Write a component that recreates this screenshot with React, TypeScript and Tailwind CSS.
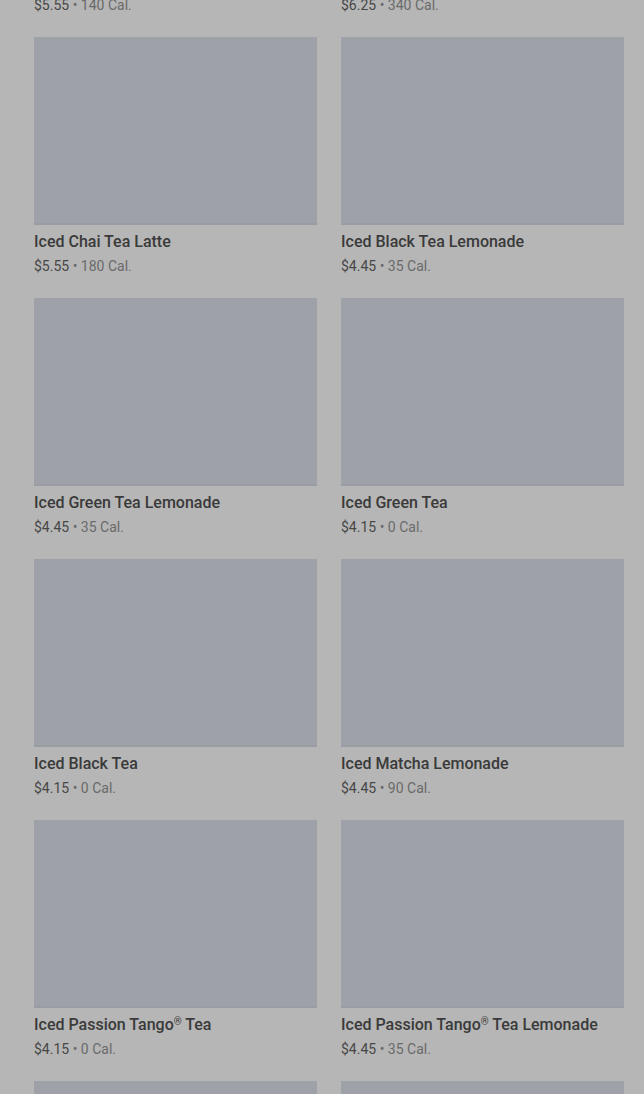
import React from "react";

type Item = { name: string; price: string; cal: string };

const items: Item[] = [
  { name: "Iced Coffee", price: "$5.55", cal: "140 Cal." },
  { name: "Iced Latte", price: "$6.25", cal: "340 Cal." },
  { name: "Iced Chai Tea Latte", price: "$5.55", cal: "180 Cal." },
  { name: "Iced Black Tea Lemonade", price: "$4.45", cal: "35 Cal." },
  { name: "Iced Green Tea Lemonade", price: "$4.45", cal: "35 Cal." },
  { name: "Iced Green Tea", price: "$4.15", cal: "0 Cal." },
  { name: "Iced Black Tea", price: "$4.15", cal: "0 Cal." },
  { name: "Iced Matcha Lemonade", price: "$4.45", cal: "90 Cal." },
  { name: "Iced Passion Tango® Tea", price: "$4.15", cal: "0 Cal." },
  { name: "Iced Passion Tango® Tea Lemonade", price: "$4.45", cal: "35 Cal." },
  { name: "Iced Peach Green Tea", price: "$4.45", cal: "60 Cal." },
  { name: "Iced Peach Green Tea Lemonade", price: "$4.45", cal: "80 Cal." },
];

function Name({ text }: { text: string }) {
  const parts = text.split("®");
  if (parts.length === 1) return <>{text}</>;
  return (
    <>
      {parts[0]}
      <span className="text-[10px] leading-none align-[5px]">®</span>
      {parts[1]}
    </>
  );
}

export default function App() {
  return (
    <div
      className="w-[644px] h-[1094px] overflow-hidden bg-[#b6b6b6]"
      style={{ fontFamily: "Roboto, 'Noto Sans', sans-serif" }}
    >
      <div className="-mt-[224px] pl-[34px] pr-[20px] grid grid-cols-2 gap-x-[24px] gap-y-[22px]">
        {items.map((it, i) => (
          <div key={i} className="flex flex-col">
            <div className="h-[188px] bg-[#9ea1a8] border-b-2 border-[#999ca2]" />
            <div className="mt-[7px] h-[20px] text-[16px] leading-[20px] font-medium text-[#3a3a3a] whitespace-nowrap">
              <Name text={it.name} />
            </div>
            <div className="mt-[4px] h-[20px] text-[14px] leading-[20px] text-[#474747] whitespace-nowrap">
              <span>{it.price}</span>
              <span className="text-[#6a6a6a]"> • {it.cal}</span>
            </div>
          </div>
        ))}
      </div>
    </div>
  );
}
